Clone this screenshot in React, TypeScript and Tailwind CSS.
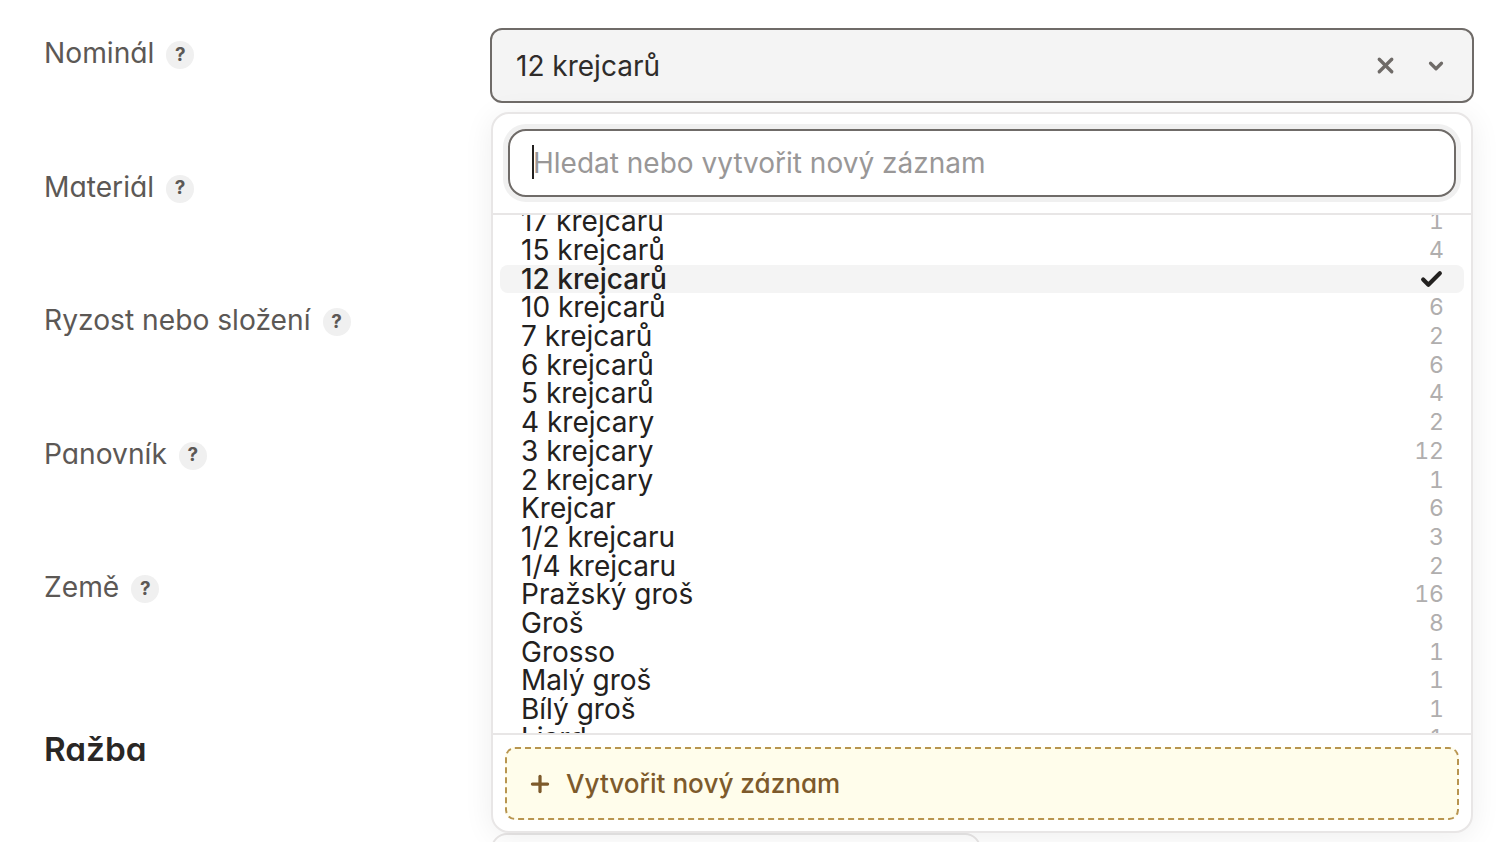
import { Check, ChevronDown, Plus, X } from "lucide-react";

const labels = ["Nominál", "Materiál", "Ryzost nebo složení", "Panovník", "Země"];

const options: { name: string; count?: number; selected?: boolean }[] = [
  { name: "17 krejcarů", count: 1 },
  { name: "15 krejcarů", count: 4 },
  { name: "12 krejcarů", selected: true },
  { name: "10 krejcarů", count: 6 },
  { name: "7 krejcarů", count: 2 },
  { name: "6 krejcarů", count: 6 },
  { name: "5 krejcarů", count: 4 },
  { name: "4 krejcary", count: 2 },
  { name: "3 krejcary", count: 12 },
  { name: "2 krejcary", count: 1 },
  { name: "Krejcar", count: 6 },
  { name: "1/2 krejcaru", count: 3 },
  { name: "1/4 krejcaru", count: 2 },
  { name: "Pražský groš", count: 16 },
  { name: "Groš", count: 8 },
  { name: "Grosso", count: 1 },
  { name: "Malý groš", count: 1 },
  { name: "Bílý groš", count: 1 },
  { name: "Liard", count: 1 },
];

function FieldLabel({ text }: { text: string }) {
  return (
    <div className="flex h-[133.5px] items-start pt-[36px] pl-[44px]">
      <span className="text-[28.2px] leading-[34px] text-[#5c5855] [font-feature-settings:'cv11']">{text}</span>
      <span className="ml-[12px] mt-[5px] flex h-[28px] w-[28px] items-center justify-center rounded-full bg-[#f0f0f0] text-[19px] font-bold text-[#5c5855]">
        ?
      </span>
    </div>
  );
}

function OptionRow({ name, count, selected }: { name: string; count?: number; selected?: boolean }) {
  return (
    <div
      className={`flex h-[28.7px] shrink-0 items-center justify-between rounded-lg pl-[21px] pr-[20px] text-[28px] leading-[28.7px] text-[#232120] ${
        selected ? "bg-[#f4f4f4] font-medium" : ""
      }`}
    >
      <span>{name}</span>
      {selected ? (
        <Check size={25} strokeWidth={4} className="text-[#232120]" />
      ) : (
        <span className="text-[23px] tabular-nums text-[#b0aeae]">{count}</span>
      )}
    </div>
  );
}

export default function App() {
  return (
    <div className="relative flex h-[842px] w-[1500px] overflow-hidden bg-white font-['Inter',sans-serif]">
      {/* Left column with labels */}
      <div className="w-[490px] shrink-0">
        {labels.map((l) => (
          <FieldLabel key={l} text={l} />
        ))}
        <h2 className="mt-[61px] pl-[44px] text-[33.3px] font-semibold leading-[40px] text-[#2a2725] [font-feature-settings:'cv11']">Ražba</h2>
        <div className="mt-[68px] pl-[44px] text-[28.2px] leading-[34px] text-[#5c5855] [font-feature-settings:'cv11']">Období ražby</div>
      </div>

      {/* Right column */}
      <div className="relative w-[984px] shrink-0 pt-[28px]">
        <div className="flex h-[75px] items-center rounded-[12px] border-2 border-[#6f6b68] bg-[#f4f4f4] pl-[24px] pr-[25px] text-[28px] text-[#2f2c2a]">
          <span className="flex-1">12 krejcarů</span>
          <X size={25} strokeWidth={3.2} className="mr-[27px] text-[#6f6b68]" />
          <ChevronDown size={22} strokeWidth={3.5} className="text-[#6f6b68]" />
        </div>

        <div className="mt-[730px] ml-[1px] h-[60px] w-[490px] rounded-[16px] border-2 border-[#e8e6e6]" />

        {/* Dropdown */}
        <div className="absolute left-[1px] top-[112px] flex h-[721px] w-[982px] flex-col overflow-hidden rounded-[18px] border-2 border-[#e8e6e6] bg-white shadow-[0_4px_30px_rgba(0,0,0,0.07)]">
          <div className="h-[101px] shrink-0 border-b-2 border-[#e8e6e6] px-[15px] pt-[15px]">
            <div className="relative">
              <input
                readOnly
                placeholder="Hledat nebo vytvořit nový záznam"
                className="h-[68px] w-full rounded-[18px] border-2 border-[#6f6b68] bg-white pl-[23px] text-[28px] shadow-[0_0_0_5px_#f0f0f0] outline-none placeholder:text-[#999797]"
              />
              <span className="absolute left-[24px] top-[16px] h-[34px] w-[2px] bg-[#232120]" />
            </div>
          </div>
          <div className="flex h-[518px] shrink-0 flex-col overflow-hidden px-[7px]">
            <div className="-mt-[7.7px] flex flex-col">
              {options.map((o) => (
                <OptionRow key={o.name} {...o} />
              ))}
            </div>
          </div>
          <div className="flex-1 border-t-2 border-[#e8e6e6] px-[12px] pt-[12px]">
            <div className="flex h-[73px] items-center rounded-[10px] border-2 border-dashed border-[#b8954f] bg-[#fffdeb] pl-[20px] text-[26.1px] font-medium text-[#7d5a2b] [font-feature-settings:'cv11']">
              <Plus size={26} strokeWidth={3} className="mr-[13px]" />
              <span>Vytvořit nový záznam</span>
            </div>
          </div>
        </div>
      </div>
    </div>
  );
}
